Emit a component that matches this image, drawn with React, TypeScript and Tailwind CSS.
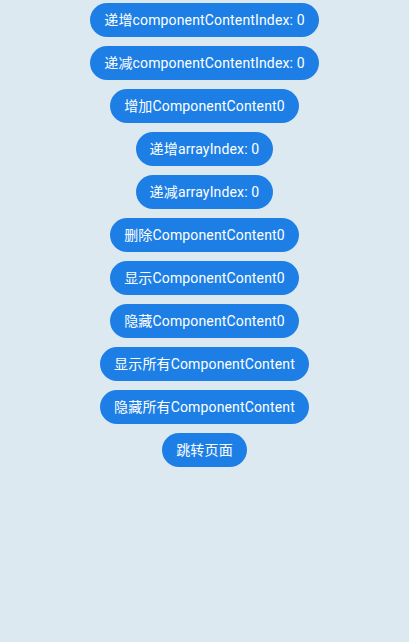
const labels = [
  "递增componentContentIndex: 0",
  "递减componentContentIndex: 0",
  "增加ComponentContent0",
  "递增arrayIndex: 0",
  "递减arrayIndex: 0",
  "删除ComponentContent0",
  "显示ComponentContent0",
  "隐藏ComponentContent0",
  "显示所有ComponentContent",
  "隐藏所有ComponentContent",
  "跳转页面",
];

export default function App() {
  return (
    <div
      className="w-[409px] h-[642px] bg-[#dce9f1] flex flex-col items-center pt-[3px] gap-[9px]"
      style={{ fontFamily: 'Roboto, "Noto Sans CJK SC", sans-serif' }}
    >
      {labels.map((label) => (
        <button
          key={label}
          className="h-[34px] px-[14px] rounded-full bg-[#1d7fe6] text-white text-[14px] leading-none tracking-[0.15px] whitespace-nowrap"
        >
          {label}
        </button>
      ))}
    </div>
  );
}
